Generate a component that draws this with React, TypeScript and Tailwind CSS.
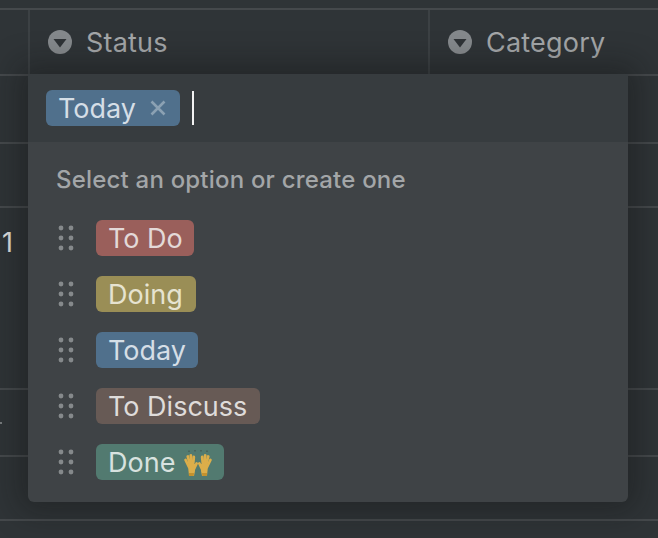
import React from 'react';

const font = { fontFamily: 'Inter, "Liberation Sans", sans-serif' };

const options = [
  { label: 'To Do', color: 'bg-[#9a5f5b]', text: 'text-[#e3d9d8]', width: 'w-[98px]' },
  { label: 'Doing', color: 'bg-[#9a8e56]', text: 'text-[#e6e3d0]', width: 'w-[100px]' },
  { label: 'Today', color: 'bg-[#50708c]', text: 'text-[#d5dee6]', width: 'w-[102px]' },
  { label: 'To Discuss', color: 'bg-[#675a55]', text: 'text-[#dfdcda]', width: 'w-[164px]' },
  { label: 'Done', color: 'bg-[#527a70]', text: 'text-[#d8e2df]', width: 'w-[128px]', emoji: true },
];

const ColumnIcon = () => (
  <svg width="24" height="24" viewBox="0 0 24 24" className="shrink-0">
    <circle cx="12" cy="12" r="12" fill="#85898c" />
    <path d="M5.500 9h13L12 17.500z" fill="#2f3336" />
  </svg>
);

const DragHandle = () => (
  <svg width="16" height="26" viewBox="0 0 16 26" className="shrink-0">
    {[3, 13].map((x) =>
      [3, 13, 23].map((y) => <circle key={`${x}-${y}`} cx={x} cy={y} r="2.400" fill="#85898b" />)
    )}
  </svg>
);

const Hand = ({ flip }: { flip?: boolean }) => (
  <g transform={flip ? 'matrix(-1 0 0 1 34 0)' : undefined}>
    <g stroke="#dcae4a" strokeWidth="2.800" strokeLinecap="round">
      <path d="M8 20L4.600 13" />
      <path d="M9 18L6.800 9.500" />
      <path d="M10.500 18L9.800 8.500" />
      <path d="M12 18L12.800 10" />
      <path d="M12.500 23L15.600 16.500" />
    </g>
    <path d="M6.800 17h7.200v7l-1 5H8l-.6-6z" fill="#dcae4a" />
    <path d="M8 26h5l-.3 3H8z" fill="#c2922f" />
  </g>
);

const RaisedHands = () => (
  <svg width="34" height="30" viewBox="0 0 34 30" className="shrink-0">
    <path d="M8 3.500v1.500M14 3v1.500M20 3v1.500M26 3.500v1.500" stroke="#46574f" strokeWidth="1.200" />
    <Hand />
    <Hand flip />
  </svg>
);

const Header = ({ name }: { name: string }) => (
  <div className="flex items-center gap-[14px] pl-[18px] text-[27px] tracking-[0.2px] text-[#a3a6a8] leading-none">
    <ColumnIcon />
    <span className="pt-[1px]">{name}</span>
  </div>
);

export default function App() {
  return (
    <div
      style={font}
      className="relative w-[658px] h-[538px] overflow-hidden bg-[#2f3437]"
    >
      <div className="h-[10px] border-b-2 border-[#45494c]" />
      <div className="flex h-[66px] border-b-2 border-[#45494c]">
        <div className="w-[30px] border-r-2 border-[#3c4144]" />
        <div className="flex items-center w-[400px] border-r-2 border-[#3c4144]">
          <Header name="Status" />
        </div>
        <div className="flex items-center flex-1">
          <Header name="Category" />
        </div>
      </div>
      <div className="h-[68px] border-b-2 border-[#45494c]" />
      <div className="h-[64px] border-b-2 border-[#45494c]" />
      <div className="h-[182px] border-b-2 border-[#45494c] pt-[21px] pl-[2px] text-[27px] leading-[28px] text-[#e0e0e0]">
        1
      </div>
      <div className="flex items-center h-[67px] border-b-2 border-[#45494c]">
        <div className="w-[2px] h-[2px] bg-[#777b7d]" />
      </div>
      <div className="h-[64px] border-b-2 border-[#45494c]" />

      {/* select menu over the table */}
      <div className="absolute left-[28px] top-[74px] w-[600px] h-[428px] rounded-b-[6px] overflow-hidden bg-[#3f4346] shadow-[0_0_30px_10px_rgba(15,15,15,0.35)]">
        <div className="flex items-center h-[68px] pl-[18px] bg-[#373c3f]">
          <div className="flex items-center h-[36px] w-[134px] pl-[12px] rounded-[6px] bg-[#50708c] text-[27px] text-[#d5dee6] leading-none">
            <span className="pt-[1px]">Today</span>
            <svg width="16" height="16" viewBox="0 0 16 16" className="ml-[14px] shrink-0">
              <path d="M1.500 1.500l13 13M14.500 1.500l-13 13" stroke="#8ba1b3" strokeWidth="2.600" />
            </svg>
          </div>
          <div className="ml-[12px] w-[2px] h-[34px] bg-[#f2f2f2]" />
        </div>
        <div className="pt-[24px] pl-[28px] text-[24px] font-medium tracking-[0.2px] leading-[28px] text-[#a3a6a8]">
          Select an option or create one
        </div>
        <div className="flex flex-col gap-[20px] pt-[26px] pl-[30px]">
          {options.map((o) => (
            <div key={o.label} className="flex items-center gap-[22px]">
              <DragHandle />
              <div
                className={`flex items-center gap-[6px] h-[36px] pl-[12px] rounded-[6px] text-[27px] leading-none ${o.width} ${o.color} ${o.text}`}
              >
                <span className="pt-[1px]">{o.label}</span>
                {o.emoji && <RaisedHands />}
              </div>
            </div>
          ))}
        </div>
      </div>
    </div>
  );
}
